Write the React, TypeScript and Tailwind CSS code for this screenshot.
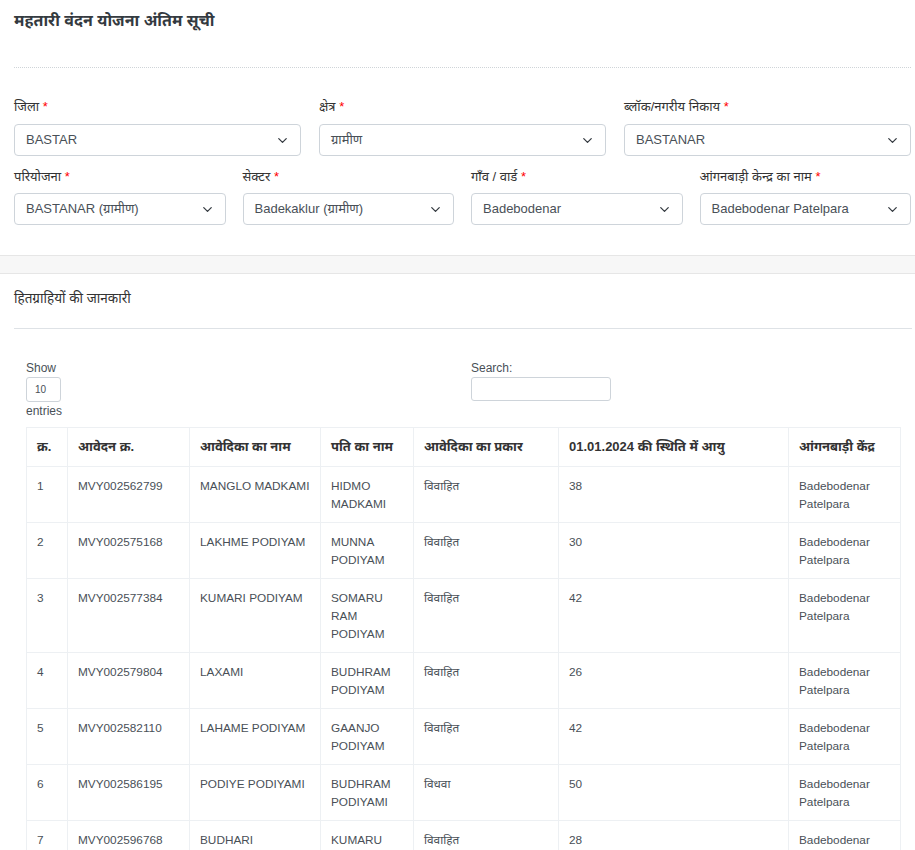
import { ChevronDown } from "lucide-react";

const FONT = { fontFamily: '"Liberation Sans", Arial, "Noto Sans", sans-serif' };

interface Row {
  id: number;
  appNo: string;
  name: string;
  husband: string;
  type: string;
  age: number;
  centre: string;
}

const rows: Row[] = [
  { id: 1, appNo: "MVY002562799", name: "MANGLO MADKAMI", husband: "HIDMO MADKAMI", type: "विवाहित", age: 38, centre: "Badebodenar Patelpara" },
  { id: 2, appNo: "MVY002575168", name: "LAKHME PODIYAM", husband: "MUNNA PODIYAM", type: "विवाहित", age: 30, centre: "Badebodenar Patelpara" },
  { id: 3, appNo: "MVY002577384", name: "KUMARI PODIYAM", husband: "SOMARU RAM PODIYAM", type: "विवाहित", age: 42, centre: "Badebodenar Patelpara" },
  { id: 4, appNo: "MVY002579804", name: "LAXAMI", husband: "BUDHRAM PODIYAM", type: "विवाहित", age: 26, centre: "Badebodenar Patelpara" },
  { id: 5, appNo: "MVY002582110", name: "LAHAME PODIYAM", husband: "GAANJO PODIYAM", type: "विवाहित", age: 42, centre: "Badebodenar Patelpara" },
  { id: 6, appNo: "MVY002586195", name: "PODIYE PODIYAMI", husband: "BUDHRAM PODIYAMI", type: "विधवा", age: 50, centre: "Badebodenar Patelpara" },
  { id: 7, appNo: "MVY002596768", name: "BUDHARI", husband: "KUMARU PODIYAM", type: "विवाहित", age: 28, centre: "Badebodenar Patelpara" },
];

function Field({ label, value, tight }: { label: string; value: string; tight?: boolean }) {
  return (
    <div className="flex flex-col">
      <label className={`${tight ? "mb-[7px]" : "mb-[8px] mt-px"} h-[18px] text-[13px] leading-[18px] text-[#333]`}>
        {label} <span className="text-[#ff0000]">*</span>
      </label>
      <div className="flex h-[32px] items-center justify-between rounded-[4px] border border-[#ced4da] bg-white pl-[11px] pr-[10px] text-[13px] text-[#495057]">
        <span>{value}</span>
        <ChevronDown size={15} strokeWidth={2} className="text-[#343a40]" />
      </div>
    </div>
  );
}

export default function App() {
  const headers = ["क्र.", "आवेदन क्र.", "आवेदिका का नाम", "पति का नाम", "आवेदिका का प्रकार", "01.01.2024 की स्थिति में आयु", "आंगनबाड़ी केंद्र"];
  const widths = ["w-[41px]", "w-[122px]", "w-[131px]", "w-[93px]", "w-[145px]", "w-[230px]", "w-[112px]"];

  return (
    <div className="min-h-[850px] bg-white text-[#333]" style={FONT}>
      {/* Filter card */}
      <div className="pl-[14px] pr-[4px] pt-[10px]">
        <h1 className="text-[16px] font-bold leading-[22px] text-[#343a40]">महतारी वंदन योजना अंतिम सूची</h1>
        <div className="mt-[35px] border-t border-dotted border-[#cfd4d8]" />
        <div className="mt-[29px] grid grid-cols-3 gap-x-[18px]">
          <Field label="जिला" value="BASTAR" />
          <Field label="क्षेत्र" value="ग्रामीण" />
          <Field label="ब्लॉक/नगरीय निकाय" value="BASTANAR" />
        </div>
        <div className="mt-[12px] grid grid-cols-4 gap-x-[17px]">
          <Field tight label="परियोजना" value="BASTANAR (ग्रामीण)" />
          <Field tight label="सेक्टर" value="Badekaklur (ग्रामीण)" />
          <Field tight label="गाँव / वार्ड" value="Badebodenar" />
          <Field tight label="आंगनबाड़ी केन्द्र का नाम" value="Badebodenar Patelpara" />
        </div>
      </div>

      {/* Separator band */}
      <div className="mt-[30px] h-[19px] border-y border-[#e6e6e6] bg-[#f7f7f7]" />

      {/* Beneficiary section */}
      <div className="pl-[14px] pr-[3px]">
        <h2 className="mt-[15px] text-[13.5px] leading-[20px] text-[#333]">हितग्राहियों की जानकारी</h2>
        <div className="mt-[19px] border-t border-[#dee2e6]" />

        <div className="px-[12px] pt-[30px]">
          <div className="flex">
            <div className="w-[445px] text-[12px] text-[#495057]">
              <div className="leading-[18px]">Show</div>
              <div className="flex h-[25px] w-[35px] items-center rounded-[3px] border border-[#ced4da] pl-[8px] text-[10px]">10</div>
              <div className="leading-[18px]">entries</div>
            </div>
            <div className="text-[12px] text-[#495057]">
              <div className="leading-[18px]">Search:</div>
              <div className="h-[24px] w-[140px] rounded-[3px] border border-[#ced4da]" />
            </div>
          </div>

          <table className="mt-[7px] w-[874px] table-fixed border-collapse text-[11.8px] text-[#495057]">
            <thead>
              <tr className="h-[39px]">
                {headers.map((h, i) => (
                  <th key={h} className={`${widths[i]} border border-[#edf0f3] px-[10px] text-left text-[13px] font-bold text-[#333]`}>
                    {h}
                  </th>
                ))}
              </tr>
            </thead>
            <tbody>
              {rows.map((r) => (
                <tr key={r.id}>
                  {[r.id, r.appNo, r.name, r.husband, r.type, r.age, r.centre].map((c, i) => (
                    <td key={i} className="border border-[#edf0f3] px-[10px] pt-[10px] pb-[9px] align-top leading-[18px]">
                      {c}
                    </td>
                  ))}
                </tr>
              ))}
            </tbody>
          </table>
        </div>
      </div>
    </div>
  );
}
